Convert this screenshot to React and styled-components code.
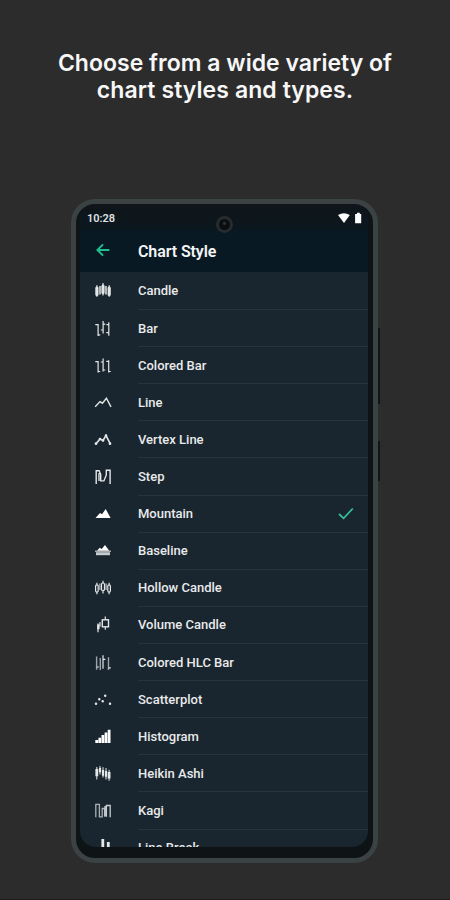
import React from "react";
import styled, { createGlobalStyle } from "styled-components";

const Global = createGlobalStyle`
  * {
    box-sizing: border-box;
  }
  body {
    margin: 0;
    background: #2c2c2c;
  }
`;

const CHARTS = [
  {
    name: "Candle",
    icon: (
      <>
        <path d="M2.9 3.2v11.6M9 1v12.4M15.2 3.2v11.6" strokeWidth="1.2" />
        <path d="M2.9 6v6.4M9 4.2v6.4M15.2 6v6.4" strokeWidth="3.2" strokeLinecap="round" />
        <path d="M6 4v8.5M12 4v8.5" strokeWidth="1.5" />
      </>
    ),
  },
  {
    name: "Bar",
    icon: <path d="M1.3 4.7h2.8M4.1 4V16M4.1 14.8h2.1M6.8 10h2.3M9.1 1v12.6M9.1 4.2h2.2M12.3 12.6h2.6M14.8 2.3v13.5M12.4 4.6h2.4" />,
  },
  {
    name: "Colored Bar",
    icon: <path d="M1.3 4.7h2.8M4.1 4V15.5M4.1 14.5h2.1M6.8 5h2.3M9.1 1.4v13M9.1 13h2.2M12.3 4.3h2.4M14.7 3.3v12.2M14.7 14.5h2.1" />,
  },
  {
    name: "Line",
    icon: <path d="M1.2 12.8L6 7.6l2.4 1.6 4-5 4.6 8.6" strokeWidth="1.4" />,
  },
  {
    name: "Vertex Line",
    icon: (
      <>
        <path d="M2 12.7l4-4.6 3 1.4 3-4.8 4.2 8" strokeWidth="1.6" />
        <path d="M2 12.7h0M6 8h0M9 9.5h0M12 4.7h0M16 12.7h0" strokeWidth="2.7" strokeLinecap="round" />
      </>
    ),
  },
  {
    name: "Step",
    icon: <path d="M2.2 16V2.7h2.9l1.6 3.6v6.6h3.2l2.4-6V2.3h3.8V16M5 5v8" strokeWidth="1.4" />,
  },
  {
    name: "Mountain",
    icon: <path d="M1.5 13l4.5-5 2 1.2 3.7-5.2L16.6 13z" fill="#fff" stroke="none" />,
  },
  {
    name: "Baseline",
    icon: (
      <>
        <path d="M3 8.8l2.7-3 2 1.2 3.3-4 4.3 5.8z" fill="#fff" stroke="none" />
        <path d="M1 9.2h16" strokeWidth="1" />
        <path d="M2 10.2h14v3H2z" fill="#c5cbce" stroke="none" />
      </>
    ),
  },
  {
    name: "Hollow Candle",
    icon: (
      <>
        <path d="M2.9 3.8v2M2.9 13v2.2M9 1.7v2.5M9 12v2.5M15.1 3.8v2M15.1 13v2.2" />
        <rect x="1.6" y="5.8" width="2.6" height="7.2" rx="1.3" />
        <rect x="7.5" y="4" width="3" height="7.5" rx="1.3" />
        <rect x="13.8" y="5.8" width="2.6" height="7.2" rx="1.3" />
        <path d="M5.9 4.5v6.5M12.1 4.5v6.5" opacity=".8" />
      </>
    ),
  },
  {
    name: "Volume Candle",
    icon: (
      <>
        <path d="M4 7.5v8.7M6 6v4.5" />
        <path d="M4.4 8.5v4.7" strokeWidth="2.4" />
        <path d="M11.3 0.5v3.3M11.3 10.8v3" />
        <rect x="8.3" y="3.8" width="6.2" height="7" strokeWidth="1.4" />
      </>
    ),
  },
  {
    name: "Colored HLC Bar",
    icon: (
      <>
        <path d="M2.6 2.5v13.3M14.5 3.2v12.8M6.3 4v12" stroke="#9ba4a8" strokeWidth="1.4" />
        <path d="M2.7 13h2.2M9 1.2v13.5M9 5.3h2.4M14.5 13.8h2.3" />
      </>
    ),
  },
  {
    name: "Scatterplot",
    icon: <path d="M2 12.8h0M5.3 8.3h0M8.7 10.2h0M11.2 4.8h0M16 12.8h0" strokeWidth="2.5" strokeLinecap="round" />,
  },
  {
    name: "Histogram",
    icon: <path d="M1.3 12h2.8v3H1.3zM4.4 9.7h2.7V15H4.4zM7.5 7h2.7v8H7.5zM10.6 4.5h2.7V15h-2.7zM13.7 1.7h2.8V15h-2.8z" fill="#fff" stroke="none" />,
  },
  {
    name: "Heikin Ashi",
    icon: (
      <>
        <path d="M2.8 2v12.5M6 1v8.5M9 2.2v10.3M12 3v11.5M15.1 4.8v11" strokeWidth="1" />
        <path d="M2.8 4v7.2M15.1 7v6.5" strokeWidth="2.8" />
        <path d="M6 3v4.2M9 5v5.8M12 6v5.7" strokeWidth="2.2" />
      </>
    ),
  },
  {
    name: "Kagi",
    icon: (
      <>
        <path d="M1.8 15.3V2.4h3.6v12.4h2.8V6.5h2.4v8" stroke="#aab1b5" strokeWidth="1.3" />
        <path d="M11 14.5V4.6h1.2M12.4 14.8V3.5h3.8v11.8" stroke="#c9ced1" strokeWidth="1.3" />
      </>
    ),
  },
  {
    name: "Line Break",
    icon: (
      <path d="M8.8 0v9M14.3 3v6" strokeWidth="2.8" />
    ),
  },
];

const App = () => {
  return (
    <Page>
      <Global />
      <Headline>
        <Phrase $spacing="0.02px">Choose from a wide variety of</Phrase>
        <Phrase $spacing="0.08px">chart styles and types.</Phrase>
      </Headline>
      <Device>
        <SideKey $top={129} $height={76} />
        <SideKey $top={242} $height={40} />
        <Camera />
        <Screen>
          <StatusBar>
            <Time>10:28</Time>
            <svg width="26" height="13" viewBox="0 0 26 13" fill="#fff">
              <path d="M1 2.9Q7 -0.3 12.8 2.9L7 11z" />
              <path d="M20 2V0.8h2.8V2h1.4v9.2h-6.1V2z" />
            </svg>
          </StatusBar>
          <TitleBar>
            <Arrow viewBox="0 0 14 14">
              <path d="M13.4 7H1.6M7.1 1.3L1.4 7l5.7 5.7" />
            </Arrow>
            <Title>Chart Style</Title>
          </TitleBar>
          <List>
            {CHARTS.map((chart) => (
              <Row key={chart.name}>
                <Icon viewBox="0 0 18 18">{chart.icon}</Icon>
                <Label>
                  {chart.name}
                  {chart.name === "Mountain" && (
                    <Check viewBox="0 0 16 13">
                      <path d="M1 7l4.6 4.3L14.8 1.5" />
                    </Check>
                  )}
                </Label>
              </Row>
            ))}
          </List>
        </Screen>
      </Device>
    </Page>
  );
};

export default App;

const Page = styled.div`
  width: 450px;
  height: 900px;
  overflow: hidden;
  display: flex;
  flex-direction: column;
  align-items: center;
  background: #2c2c2c;
  border-bottom: 1px solid #211b1e;
`;

const Headline = styled.h1`
  height: 199px;
  margin: 0;
  padding-top: 50px;
  flex-shrink: 0;
  font-family: Inter, "Liberation Sans", sans-serif;
  font-size: 23px;
  font-weight: 600;
  line-height: 27px;
  color: #f7f7f7;
  text-align: center;
`;

const Phrase = styled.span`
  display: block;
  white-space: nowrap;
  letter-spacing: ${(p) => p.$spacing};
`;

const Device = styled.div`
  position: relative;
  width: 307px;
  height: 664px;
  flex-shrink: 0;
  margin-right: 1px;
  padding: 0 5px 11px 4px;
  border: 5px solid #3b4244;
  border-radius: 24px;
  background: #0e1416;
`;

const SideKey = styled.div`
  position: absolute;
  right: -7px;
  top: ${(p) => p.$top - 5}px;
  width: 2px;
  height: ${(p) => p.$height}px;
  background: #111314;
`;

const Camera = styled.div`
  position: absolute;
  left: 140px;
  top: 12px;
  width: 17px;
  height: 17px;
  border: 3px solid #262b2e;
  border-radius: 50%;
  background: radial-gradient(circle at 50% 40%, #2c3439 0 1px, #0a0e10 2px);
`;

const Screen = styled.div`
  height: 100%;
  overflow: hidden;
  border-radius: 16px;
  background: #1a262f;
  font-family: Roboto, sans-serif;
  color: #e8eaeb;
`;

const StatusBar = styled.div`
  height: 26px;
  display: flex;
  align-items: center;
  justify-content: space-between;
  padding: 3px 5px 0 7px;
  background: linear-gradient(#0f1519, #0c171e);
`;

const Time = styled.span`
  font-size: 11px;
  font-weight: 600;
  color: #dfe2e4;
`;

const TitleBar = styled.div`
  height: 42px;
  display: flex;
  align-items: center;
  padding-left: 16px;
  background: #091923;
`;

const Arrow = styled.svg`
  width: 14px;
  height: 14px;
  margin: -2px 28px 0 0;
  fill: none;
  stroke: #22bd8c;
  stroke-width: 1.9;
`;

const Title = styled.h2`
  margin: 0;
  font-size: 16px;
  font-weight: 600;
  letter-spacing: -0.1px;
  color: #f3f5f6;
`;

const List = styled.div`
  display: flex;
  flex-direction: column;
  padding-top: 0.9px;
`;

const Row = styled.div`
  height: 37.12px;
  flex-shrink: 0;
  display: flex;
  align-items: center;
  padding-left: 14px;
`;

const Icon = styled.svg`
  width: 18px;
  height: 18px;
  margin-right: 26px;
  fill: none;
  stroke: #e4e7e8;
  stroke-width: 1.2;
`;

const Label = styled.div`
  flex: 1;
  height: 100%;
  display: flex;
  align-items: center;
  justify-content: space-between;
  padding-right: 14px;
  border-bottom: 1px solid #28343c;
  font-size: 13px;
  font-weight: 500;
`;

const Check = styled.svg`
  width: 16px;
  height: 13px;
  fill: none;
  stroke: #35bd96;
  stroke-width: 1.8;
`;
